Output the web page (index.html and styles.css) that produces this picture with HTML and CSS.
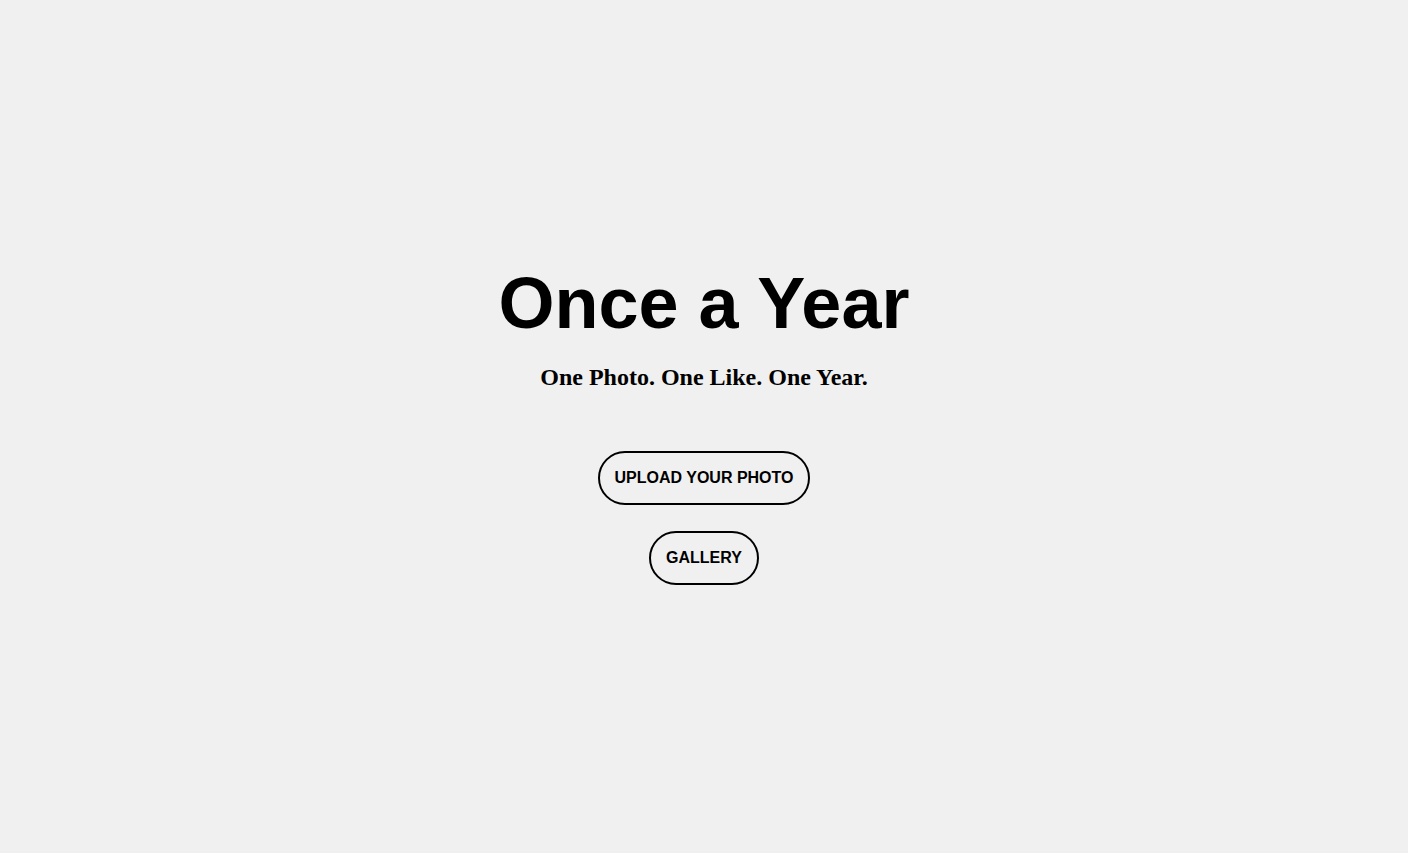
FILE: index.html
```html
<!DOCTYPE html>
<html lang="en">
<head>
<meta charset="utf-8">
<title>Once a Year</title>
<link rel="stylesheet" href="styles.css">
</head>
<body>
<main class="hero">
  <h1 class="title">Once a Year</h1>
  <h2 class="tagline">One Photo. One Like. One Year.</h2>
  <div class="actions">
    <button class="pill">UPLOAD YOUR PHOTO</button>
    <button class="pill">GALLERY</button>
  </div>
</main>
<section class="rest"></section>
</body>
</html>
```

FILE: styles.css
```css
html, body {
  margin: 0;
  padding: 0;
  background: #f0f0f0;
}
.hero {
  box-sizing: border-box;
  width: 100vw;
  height: 100vh;
  padding-bottom: 6px;
  display: flex;
  flex-direction: column;
  align-items: center;
  justify-content: center;
}
.title {
  margin: 0;
  font-family: "Liberation Sans", Arial, sans-serif;
  font-weight: 700;
  font-size: 72px;
  color: #000;
}
.tagline {
  margin: 20px 0 0;
  font-family: "Liberation Serif", "Times New Roman", serif;
  font-weight: 700;
  font-size: 24px;
  color: #000;
}
.actions {
  margin-top: 60px;
  display: flex;
  flex-direction: column;
  align-items: center;
  gap: 26px;
}
.pill {
  font-family: "Liberation Sans", Arial, sans-serif;
  font-weight: 700;
  font-size: 16px;
  color: #000;
  background: transparent;
  border: 2px solid #000;
  border-radius: 999px;
  padding: 16px 15px;
  line-height: normal;
  cursor: pointer;
}
.rest {
  height: 400vh;
}
```
